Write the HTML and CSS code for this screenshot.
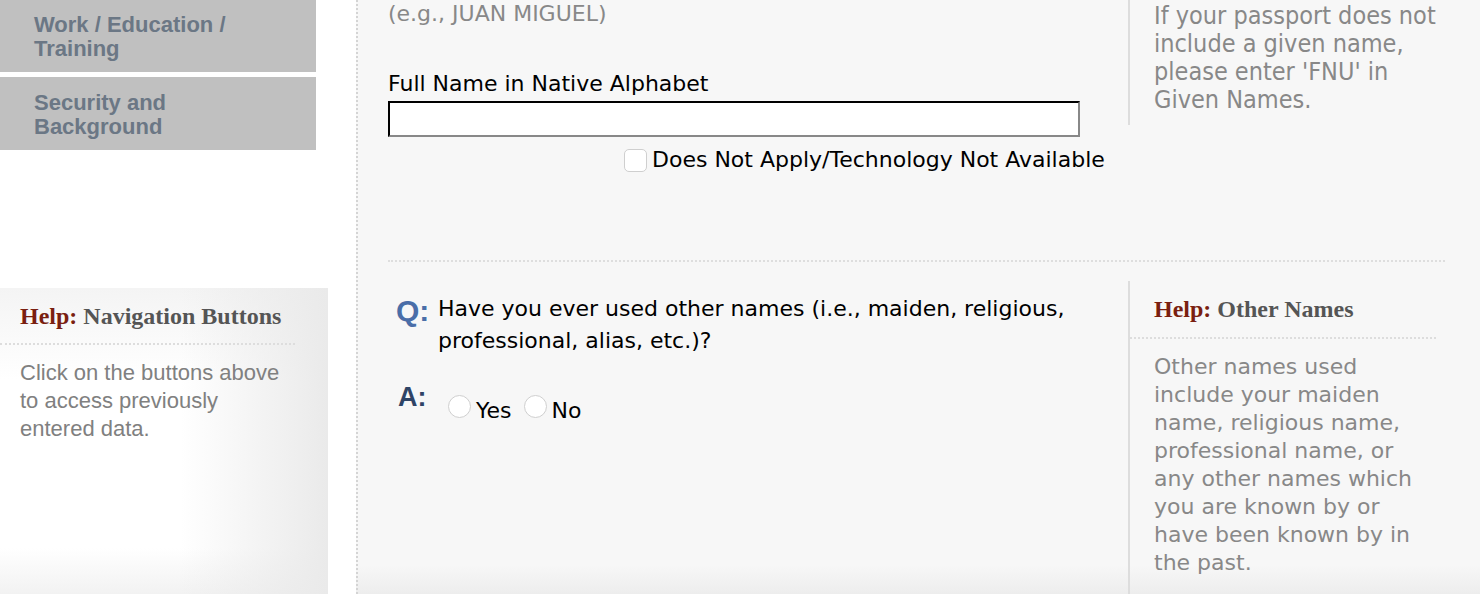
FILE: index.html
```html
<!DOCTYPE html>
<html lang="en">
<head>
    <meta charset="UTF-8">
    <meta name="viewport" content="width=device-width, initial-scale=1.0">
    <title>Personal Information</title>
    <link rel="stylesheet" href="styles.css">
</head>
<body>
    <div class="page">
        <!-- left side navigation -->
        <aside class="sidebar">
            <nav class="nav-list">
                <a class="nav-btn" href="#">Work / Education /<br>Training</a>
                <a class="nav-btn" href="#">Security and<br>Background</a>
            </nav>
            <div class="nav-help">
                <h4 class="help-title"><span class="help-label">Help:</span> Navigation Buttons</h4>
                <p>Click on the buttons above to access previously entered data.</p>
            </div>
        </aside>

        <!-- form area -->
        <main class="form-area">
            <section class="form-row top-row">
                <div class="form-main">
                    <div class="hint">(e.g., JUAN MIGUEL)</div>
                    <label class="field-label" for="nativeName">Full Name in Native Alphabet</label>
                    <input class="text-input" type="text" id="nativeName">
                    <div class="na-row">
                        <input class="check" type="checkbox" id="nativeNA">
                        <label for="nativeNA">Does Not Apply/Technology Not Available</label>
                    </div>
                </div>
                <div class="form-help narrow">
                    <p>If your passport does not include a given name, please enter 'FNU' in Given Names.</p>
                </div>
            </section>

            <div class="separator"></div>

            <section class="form-row question-row">
                <div class="form-main">
                    <div class="qa">
                        <span class="q-mark">Q:</span>
                        <span class="q-text">Have you ever used other names (i.e., maiden, religious, professional, alias, etc.)?</span>
                    </div>
                    <div class="qa answer">
                        <span class="a-mark">A:</span>
                        <label class="radio"><input type="radio" name="otherNames">Yes</label>
                        <label class="radio"><input type="radio" name="otherNames">No</label>
                    </div>
                </div>
                <div class="form-help">
                    <h4 class="help-title"><span class="help-label">Help:</span> Other Names</h4>
                    <p>Other names used include your maiden name, religious name, professional name, or any other names which you are known by or have been known by in the past.</p>
                </div>
            </section>
        </main>
    </div>
</body>
</html>
```

FILE: styles.css
```css
/* page base */
body {
    margin: 0;
    background-color: #fff;
    font-family: "DejaVu Sans", Verdana, sans-serif;
}

.page {
    display: flex;
    height: 594px;
    overflow: hidden;
}

/* left column */
.sidebar {
    flex: 0 0 328px;
    margin-right: 28px;
    display: flex;
    flex-direction: column;
}

.nav-list {
    display: flex;
    flex-direction: column;
    gap: 5px;
    width: 316px;
    margin-top: -1px;
}

.nav-btn {
    display: block;
    background-color: #c0c0c0;
    color: #6b7785;
    font-family: "Liberation Sans", Arial, sans-serif;
    font-weight: bold;
    font-size: 22px;
    line-height: 24px;
    padding: 14px 34px 11px;
    text-decoration: none;
}

.nav-help {
    margin-top: 138px;
    flex: 1;
    padding-top: 14px;
    background: linear-gradient(to right, rgba(255, 255, 255, 0) 55%, #eaeaea 100%),
                linear-gradient(to bottom, #f4f4f4, #fff 30%, #fff 85%, #f2f2f2);
}

.help-title {
    margin: 0;
    font-family: "Liberation Serif", "Times New Roman", serif;
    font-size: 24px;
    line-height: 28px;
    font-weight: bold;
    color: #555;
    white-space: nowrap;
}

.help-label {
    color: #7a1f10;
}

.nav-help .help-title {
    padding: 0 0 13px 20px;
    width: 275px;
    border-bottom: 2px dotted #ddd;
}

.nav-help p {
    margin: 14px 20px 0;
    width: 265px;
    font-family: "Liberation Sans", Arial, sans-serif;
    font-size: 22px;
    line-height: 28px;
    color: #808080;
}

/* main form area */
.form-area {
    flex: 1;
    background: linear-gradient(to bottom, #f7f7f7 565px, #ededed 594px);
    border-left: 2px dotted #d4d4d4;
    border-right: 3px dotted #d8d8d8;
    padding: 0 31px 0 30px;
}

.form-row {
    display: flex;
}

.form-main {
    flex: 0 0 740px;
}

.form-help {
    border-left: 2px solid #dddddd;
    padding-left: 24px;
    width: 300px;
}

.form-help p {
    margin: 0;
    font-size: 22px;
    line-height: 28px;
    color: #888;
}

.top-row .form-help {
    height: 125px;
}

.form-help.narrow p {
    font-family: "DejaVu Sans Condensed", "DejaVu Sans", sans-serif;
    font-size: 25px;
    padding-top: 2px;
    width: 295px;
}

.hint {
    font-size: 22px;
    line-height: 28px;
    color: #888;
}

.field-label {
    display: block;
    margin-top: 42px;
    font-size: 22px;
    line-height: 28px;
    color: #000;
}

.text-input {
    display: block;
    box-sizing: border-box;
    width: 692px;
    height: 36px;
    margin-top: 3px;
    border: 2px inset #888;
    border-top-color: #333;
    border-left-color: #333;
    background-color: #fff;
}

.na-row {
    display: flex;
    align-items: center;
    margin: 9px 0 0 236px;
    font-size: 22px;
    line-height: 28px;
}

.check {
    appearance: none;
    width: 23px;
    height: 23px;
    margin: 0 5px 0 0;
    border: 1px solid #cfcfcf;
    border-radius: 5px;
    background-color: #fff;
}

.separator {
    margin-top: 86px;
    width: 1057px;
    border-top: 2px dotted #dedede;
}

/* question block */
.question-row {
    margin-top: 19px;
}

.question-row .form-main {
    padding-top: 12px;
}

.qa {
    display: flex;
    align-items: flex-start;
    font-size: 22px;
    line-height: 32px;
    color: #000;
}

.q-mark,
.a-mark {
    font-family: "Liberation Sans", Arial, sans-serif;
    font-weight: bold;
    box-sizing: border-box;
}

.q-mark {
    color: #4a6ea8;
    font-size: 30px;
    width: 50px;
    padding-left: 8px;
    margin-top: 2px;
}

.a-mark {
    color: #2f4466;
    font-size: 27px;
    padding-left: 10px;
    width: 60px;
    margin-top: -20px;
}

.q-text {
    width: 650px;
}

.answer {
    margin-top: 30px;
    align-items: center;
}

.radio {
    display: flex;
    align-items: center;
    margin-right: 12px;
    padding-top: 8px;
}

.radio input {
    appearance: none;
    width: 23px;
    height: 23px;
    margin: -10px 5px 0 0;
    border: 1px solid #cfcfcf;
    border-radius: 50%;
    background-color: #fff;
}

.question-row .form-help {
    height: 307px;
    padding-left: 0;
    padding-top: 14px;
}

.form-help .help-title {
    padding: 0 0 14px 24px;
    border-bottom: 2px dotted #dddddd;
    width: 282px;
}

.form-help .help-title + p {
    padding: 14px 0 0 24px;
    width: 262px;
}
```
